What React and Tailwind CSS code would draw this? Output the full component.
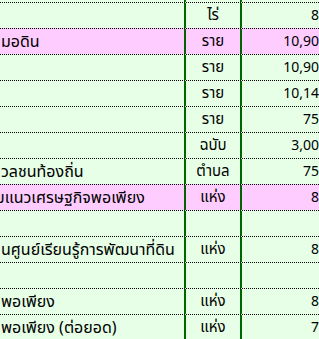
const ROWS = [
  { label: '', unit: 'ไร่', value: '80' },
  { label: 'มอดิน', unit: 'ราย', value: '10,900', pink: true },
  { label: '', unit: 'ราย', value: '10,900' },
  { label: '', unit: 'ราย', value: '10,140' },
  { label: '', unit: 'ราย', value: '750' },
  { label: '', unit: 'ฉบับ', value: '3,000' },
  { label: 'วลชนท้องถิ่น', unit: 'ตำบล', value: '750' },
  { label: 'บแนวเศรษฐกิจพอเพียง', unit: 'แห่ง', value: '80', pink: true, shift: true },
  { label: '', unit: '', value: '' },
  { label: 'นศูนย์เรียนรู้การพัฒนาที่ดิน', unit: 'แห่ง', value: '80' },
  { label: '', unit: '', value: '' },
  { label: 'พอเพียง', unit: 'แห่ง', value: '80' },
  { label: 'พอเพียง (ต่อยอด)', unit: 'แห่ง', value: '70' },
];

function Row({ row }) {
  const bg = row.pink ? 'bg-[#ffccff]' : 'bg-[#e6ffe6]';
  return (
    <div className={`flex h-[26px] border-t border-dotted border-black ${bg}`}>
      <div className="w-[184px] overflow-hidden whitespace-nowrap flex items-center text-[16px]">
        <span className={row.shift ? '-ml-[5px]' : 'ml-px'}>{row.label}</span>
      </div>
      <div className="w-[56px] border-l-2 border-[#006400] flex items-center justify-center text-[15px]">
        {row.unit}
      </div>
      <div className="w-[89px] border-l-2 border-[#006400] flex items-center justify-end pr-[2px]">
        {row.value}
      </div>
    </div>
  );
}

export default function App() {
  return (
    <div
      className="w-[319px] h-[339px] overflow-hidden bg-[#e6ffe6] text-black text-[14px] leading-none"
      style={{ fontFamily: 'Tahoma, "Noto Sans Thai", "DejaVu Sans", sans-serif' }}
    >
      <div className="w-[329px]">
        <div className="flex h-[2px]">
          <div className="w-[184px]" />
          <div className="w-[56px] border-l-2 border-[#006400]" />
          <div className="w-[89px] border-l-2 border-[#006400]" />
        </div>
        {ROWS.map((row, i) => (
          <Row key={i} row={row} />
        ))}
      </div>
    </div>
  );
}
